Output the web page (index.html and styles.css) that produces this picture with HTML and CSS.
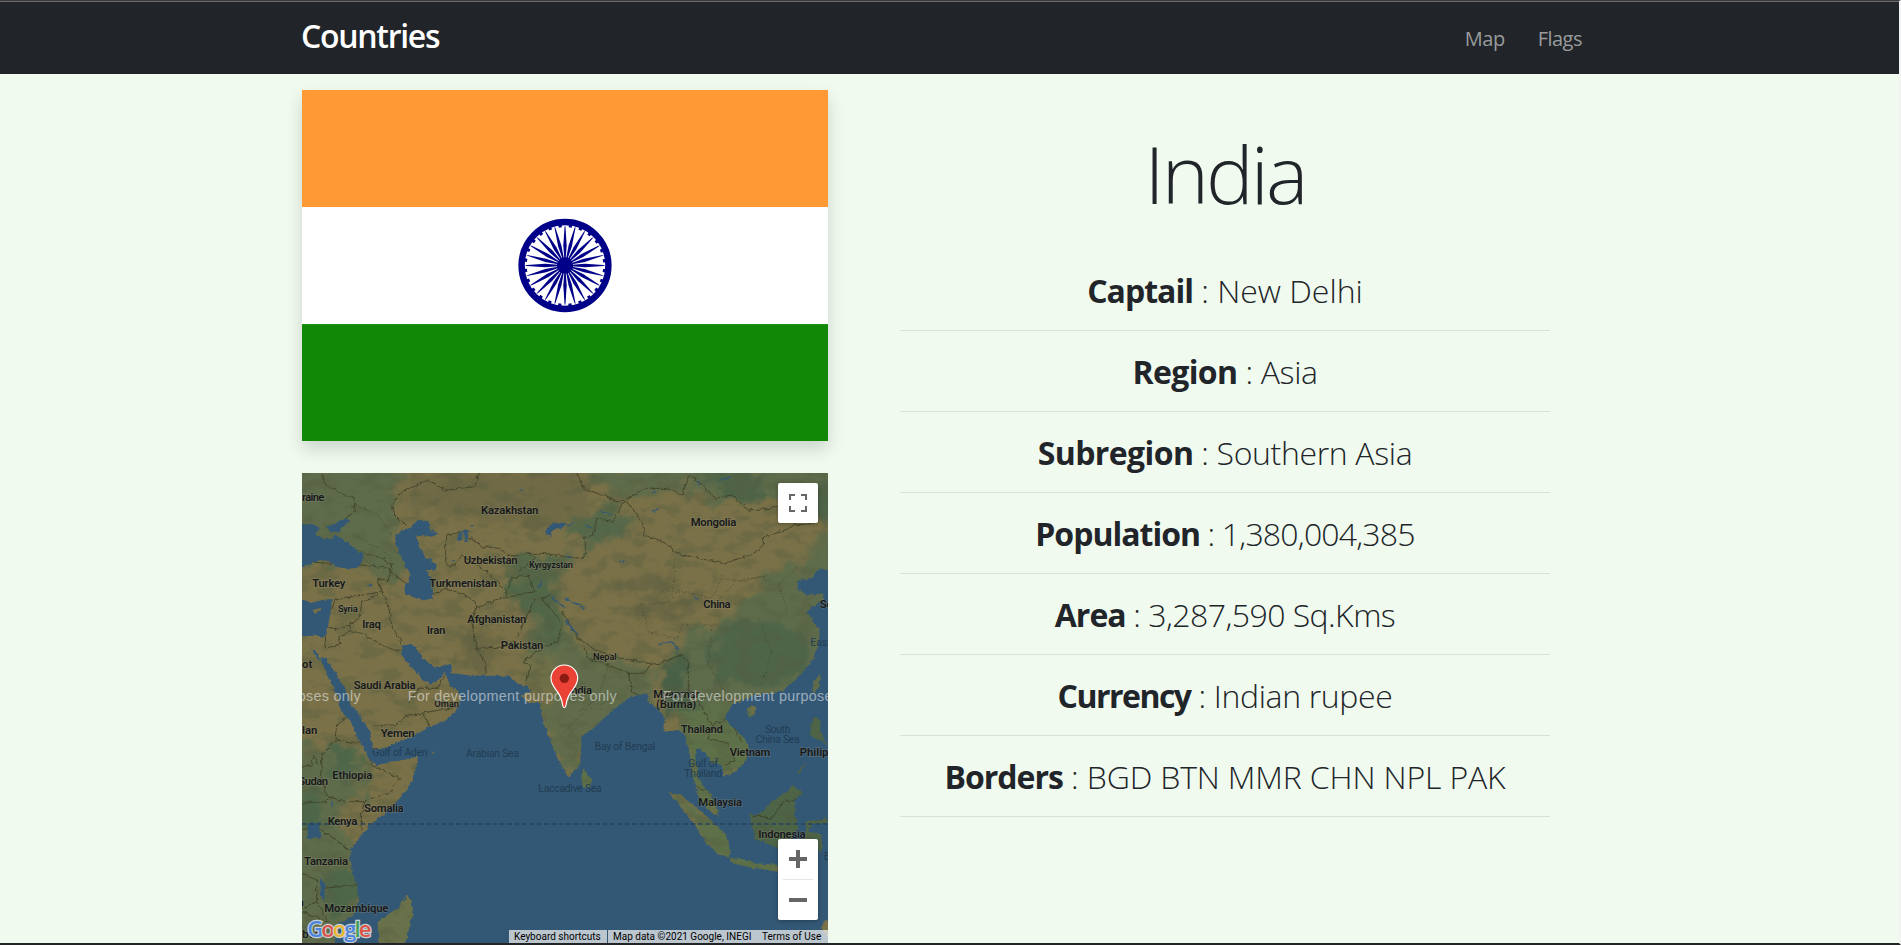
FILE: index.html
```
<!DOCTYPE html>
<html lang="en">
<head>
<meta charset="utf-8">
<title>Countries</title>
<link rel="stylesheet" href="styles.css">
</head>
<body>
<header class="navbar">
  <a class="brand">Countries</a>
  <nav class="links"><a class="link-map">Map</a><a class="link-flags">Flags</a></nav>
</header>
<main class="content">
  <section class="visuals">
    <svg class="flag" viewBox="0 0 526 350" preserveAspectRatio="none">
      <rect width="526" height="117" fill="#ff9933"/>
      <rect y="116.7" width="526" height="117" fill="#fff"/>
      <rect y="233.4" width="526" height="117" fill="#128807"/>
      <g transform="translate(263 175)" fill="#000088">
        <circle r="43.4" fill="none" stroke="#000088" stroke-width="6.4"/>
        <circle r="8.2"/>
        <circle r="39.7" fill="none" stroke="#000088" stroke-width="3" stroke-dasharray="3.2 7.193" stroke-dashoffset="-3.6"/>
        <defs><path id="spoke" d="M0-40.5L-.5-38-1.7-20-.7-7H.7L1.7-20 .5-38Z"/>
        <g id="quad"><use href="#spoke"/><use href="#spoke" transform="rotate(15)"/><use href="#spoke" transform="rotate(30)"/><use href="#spoke" transform="rotate(45)"/><use href="#spoke" transform="rotate(60)"/><use href="#spoke" transform="rotate(75)"/></g></defs>
        <use href="#quad"/><use href="#quad" transform="rotate(90)"/><use href="#quad" transform="rotate(180)"/><use href="#quad" transform="rotate(270)"/>
      </g>
    </svg>
    <div class="map">
      <svg class="map-canvas" viewBox="21 24 1578 1410" preserveAspectRatio="none">
        <defs>
          <filter id="soft" x="-5%" y="-5%" width="110%" height="110%" color-interpolation-filters="sRGB"><feGaussianBlur stdDeviation="9" result="b"/><feTurbulence type="fractalNoise" baseFrequency=".02" numOctaves="4" seed="4" result="n"/><feDisplacementMap in="b" in2="n" scale="90" xChannelSelector="R" yChannelSelector="G"/></filter>
          <filter id="coast" x="0" y="0" width="100%" height="100%" color-interpolation-filters="sRGB"><feTurbulence type="fractalNoise" baseFrequency=".07" numOctaves="2" seed="7" result="n"/><feDisplacementMap in="SourceGraphic" in2="n" scale="14" xChannelSelector="R" yChannelSelector="G"/></filter>
          <filter id="relief" x="0" y="0" width="100%" height="100%" color-interpolation-filters="sRGB"><feTurbulence type="fractalNoise" baseFrequency=".016 .026" numOctaves="5" seed="11"/><feColorMatrix values="0 0 0 0 .33  0 0 0 0 .36  0 0 0 0 .25  5 0 0 0 -2.4"/></filter>
        </defs>
        <rect x="21" y="24" width="1578" height="1410" fill="#7a7148"/>
        <g filter="url(#soft)">
          <path fill="#5f6c4b" d="M0 0H330L300 100 300 200 330 330 300 380 230 310 130 290 0 320Z"/>
          <path fill="#706a46" d="M340 20H880V150L700 190 500 150 330 140Z"/>
          <path fill="#5f6c4b" d="M860 0H1620V60L1480 120 1390 90 1260 110 1170 60 1080 90 990 100 900 60Z"/>
          <path fill="#4e6447" d="M1200 20H1400L1420 110 1340 120Z M1530 100L1620 20V200Z"/>
          <path fill="#5f6c4b" d="M1620 190L1500 290 1400 350 1330 420 1270 500 1180 480 1130 600 1180 720H1620Z"/>
          <path fill="#4f6548" d="M1280 480L1420 460 1540 520 1520 640 1400 680 1270 640 1240 560Z"/>
          <path fill="#476047" d="M1090 610L1170 570 1180 700 1260 720 1350 800 1280 830 1130 740Z"/>
          <path fill="#606c4b" d="M800 450L860 560 950 590 1080 610 1060 720 950 770 870 830 850 940 790 920 740 740 790 630 700 580 700 450Z"/>
          <path fill="#6f7048" d="M730 570L800 560 790 650 700 690 680 610Z"/>
          <path fill="#516748" d="M630 340L780 330 810 500 760 540 710 440 630 380Z"/>
          <path fill="#55694a" d="M650 270L840 280 800 330 650 330Z M960 120L1020 190 880 250 810 180Z"/>
          <path fill="#5f6c4b" d="M0 870L120 825 210 880 210 1000 110 1050 180 1140 200 1460H0Z"/>
          <path fill="#4e6749" d="M110 830L200 880 170 960 110 930Z M80 1230L200 1220 190 1320 110 1360Z M0 980H70L80 1100H0Z"/>
          <path fill="#5d7048" d="M1150 720H1380V940H1260L1280 1060 1200 1000Z M1100 960L1340 1120 1460 1190V1260L1300 1210Z M850 890H910V1000H840Z"/>
          <path fill="#4d6447" d="M1350 940H1620V1180H1350Z M1480 720H1620V970H1480Z"/>
          <path fill="#68714a" d="M230 1280H370V1450H230Z"/>
          <path fill="#6b6744" d="M500 480L600 530 580 620 500 620Z M1000 320L1150 330 1120 380 980 370Z M1010 420L1200 390 1200 440 1050 480Z"/>
        </g>
        <rect x="21" y="24" width="1578" height="1410" filter="url(#relief)" opacity=".35"/>
        <g filter="url(#coast)">
          <g fill="none" stroke="#3f4029" stroke-width="2.6" stroke-linejoin="round">
            <path d="M80 24L90 60 140 85 180 100 178 140 150 162M335 185L300 150 290 120 320 80 400 45 450 75 540 65 550 24M452 300V212L500 200 560 245 610 250 650 275 700 262 720 280 670 320M452 300H480L500 270 560 310 630 370 635 390M415 385L450 370 500 385 540 410 545 430 600 405 690 385 720 380 700 330 650 340 640 370"/>
            <path d="M21 290L200 300 240 305 280 310 330 355M190 255L260 280 290 300 280 350 250 340 260 380 120 405 110 435M250 390L200 410 195 460 130 495 100 490M165 478L165 500 200 505 290 555 325 555M250 350L280 420 290 480 320 535M165 500L130 515 140 535 95 552 90 510M545 430L530 470 545 550 575 600 570 625M545 550L640 545 670 510 720 400M690 655L710 600 685 590 740 550 790 530 800 470 740 400 770 390M340 715L370 670 430 670 450 625M232 780L300 780 330 755 380 745 490 725M385 745L405 785"/>
            <path d="M845 24L865 70 920 90 970 110 990 105 1050 70 1110 70 1160 90 1185 30 1220 55 1260 100 1310 90 1360 135 1430 130 1480 110M995 110L1040 170 1050 210 1125 240 1140 265 1285 295 1370 270 1405 240 1405 215 1460 200 1500 180 1560 175M990 105L955 170 905 160 895 210 865 220 875 265 855 280 740 265 700 265"/>
            <path d="M800 440L850 520 900 555 980 580 1040 590 1080 600 1160 570 1180 590 1180 690M870 550L880 580 940 600 1000 625 1050 625 1070 590M1000 625L1010 680 1045 700M1180 690L1210 710 1260 690 1310 710M1210 710L1250 780 1240 820 1300 835 1320 890 1290 900M1250 780L1300 760 1340 830"/>
            <path d="M120 825L125 780 160 750M120 825L200 835 220 860M120 825L80 870 80 950 100 995 150 1010 210 1010M315 940L230 900 225 880M21 905L50 900 55 870 70 900M21 1015L90 1010 110 1000M21 1092H75L165 1155M210 1010L200 1040 198 1095M21 1225L65 1245 65 1310 21 1330M85 1270L185 1260M65 1310L100 1370 21 1340M1205 965L1220 975 1240 975M1370 1050L1430 1060 1465 1010 1510 1000"/>
            <path stroke-dasharray="12 8" d="M210 1008L280 985 315 940"/>
            <path stroke-dasharray="5 5" opacity=".6" d="M170 120L240 140 290 210M165 205L270 260 300 300M1100 375L1190 385 1250 400 1280 340 1340 350 1410 330M1040 420L1130 410 1140 300M1040 420L1060 500 1150 520 1160 480 1280 480M1280 400L1320 350 1420 330M1250 480L1240 600 1290 680M1390 460L1430 560 1400 660M1510 300L1450 360 1480 450M940 600L910 700 850 740M780 830L880 730 960 700"/>
          </g>
          <path fill="#335876" fill-rule="evenodd" d="M0 175L50 180 75 188 60 208 85 222 125 212 145 225 185 255 205 270 200 295 185 308 160 312 125 305 100 288 70 285 40 300 0 318ZM90 188L150 160 165 163 140 190 125 205 100 195Z
          M0 395L50 412 85 405 110 402 108 430 100 480 88 515 60 512 0 514ZM52 440L62 432 80 430 62 445Z
          M300 215L320 195 340 190 370 165 400 168 405 195 430 205 410 215 385 210 365 215 370 240 385 262 393 285 405 280 425 300 420 315 395 315 410 350 415 390 410 405 380 402 350 395 330 385 328 365 340 350 345 325 325 290 305 250Z
          M48 545L60 560 78 582 70 584 58 568Z M490 200H500V225H490ZM505 192H520V230H507Z M750 195L780 172 815 175 800 190 770 195 770 215 755 208Z M38 1074L75 1072 76 1118 38 1120ZM75 1240L88 1250 90 1315 78 1290Z M110 1002L118 1030 110 1025Z
          M75 578L100 640 130 695 132 725 150 750 170 775 190 825 215 860 225 885 245 900 300 890 368 875 365 905 345 960 310 1005 270 1045 230 1075 200 1110 170 1150 165 1170 175 1230 187 1260 190 1320 170 1355 130 1375 130 1410 110 1450H1620V318L1595 315 1575 310 1550 340 1510 345 1508 370 1535 390 1585 385 1585 402 1535 440 1555 470 1575 500 1570 540 1550 590 1510 640 1460 680 1370 692 1350 705 1310 718 1290 755 1305 780 1340 810 1360 840 1355 885 1320 920 1285 935 1280 900 1250 890 1230 865 1210 850 1200 870 1205 910 1215 950 1230 970 1250 990 1265 1030 1272 1055 1255 1045 1215 1005 1200 960 1190 920 1185 870 1170 810 1150 795 1110 800 1105 755 1090 730 1062 715 1055 685 1005 695 955 735 895 790 860 815 855 900 820 937 790 885 765 825 740 755 735 710 700 715 680 692 710 675 685 660 665 655 640 632 540 632 470 625 468 598 455 600 420 605 385 580 365 550 345 535 318 540 325 580 345 600 365 625 370 620 378 640 385 652 410 655 430 645 450 620 457 640 465 660 490 680 500 700 480 740 450 768 400 785 350 815 300 835 260 855 232 852 225 800 200 760 165 712 150 670 130 640 110 605 90 575Z
          M865 910L878 925 893 945 885 970 865 968 858 940Z
          M1122 982L1155 990 1195 1020 1240 1060 1275 1090 1300 1120 1305 1175 1275 1170 1230 1130 1200 1080 1160 1030Z
          M1305 1180L1340 1182 1390 1195 1450 1200V1220L1380 1210 1310 1195Z
          M1360 1045L1390 1050 1430 1010 1470 985 1495 960 1525 985 1500 1005 1500 1050 1510 1090 1490 1120 1450 1150 1380 1120 1370 1080Z
          M1535 1068L1599 1060V1075L1550 1080 1540 1100 1580 1110 1580 1165 1560 1140 1545 1180 1530 1120Z
          M1545 780L1560 755 1580 765 1575 800 1599 840 1580 830 1550 815Z M1505 925L1535 890 1510 930Z M1550 655L1575 630 1575 660 1555 685Z
          M1355 730L1370 720 1385 730 1380 750 1360 755Z
          M335 1290L350 1310 355 1340 340 1400 325 1450H250L248 1370 270 1355 310 1330Z M408 862L425 862 415 866Z M1585 1370L1599 1365V1420L1580 1390Z"/>
          <path fill="none" stroke="#335876" stroke-width="4" d="M815 180L835 176M920 140L945 150M870 180L890 190M1070 82L1085 80M1070 140L1090 135M1210 45L1212 65M1275 45L1305 35M740 350L730 370M770 395L810 430M810 400L870 430M810 465L850 510M1090 540L1130 530 1150 555M1195 395L1210 402M220 362L232 360M670 75H680M525 182H535M970 290L990 288M810 278H830M470 290L480 285"/>
        </g>
        <path d="M21 1077H1599" stroke="#28435a" stroke-width="4" stroke-dasharray="14 8"/>
        <g class="label sea">
          <text x="232" y="872" textLength="166">Gulf of Aden</text><text x="513" y="877" textLength="159">Arabian Sea</text>
          <text x="899" y="855" textLength="182">Bay of Bengal</text><text x="730" y="981" textLength="190">Laccadive Sea</text>
          <text x="1410" y="804" textLength="76">South</text><text x="1382" y="833" textLength="132">China Sea</text>
          <text x="1180" y="907" textLength="89">Gulf of</text><text x="1168" y="935" textLength="113">Thailand</text>
          <text x="1546" y="543">East</text><text x="1587" y="1184">B</text>
        </g>
        <g class="label">
          <text x="21" y="108" textLength="67">raine</text><text x="558" y="147" textLength="172">Kazakhstan</text>
          <text x="506" y="297" textLength="162">Uzbekistan</text><text class="minor" x="702" y="308" textLength="132">Kyrgyzstan</text>
          <text x="52" y="365" textLength="99">Turkey</text><text x="403" y="365" textLength="203">Turkmenistan</text>
          <text class="minor" x="129" y="441" textLength="59">Syria</text><text x="202" y="490" textLength="56">Iraq</text>
          <text x="395" y="508" textLength="56">Iran</text><text x="517" y="475" textLength="177">Afghanistan</text>
          <text x="617" y="552" textLength="128">Pakistan</text><text x="21" y="609">ot</text>
          <text x="176" y="673" textLength="186">Saudi Arabia</text><text class="minor" x="418" y="727" textLength="74">Oman</text>
          <text x="1187" y="182" textLength="137">Mongolia</text><text x="1225" y="429" textLength="82">China</text>
          <text x="1574" y="429">So</text><text class="minor" x="894" y="584" textLength="71">Nepal</text>
          <text x="820" y="686" textLength="71">India</text><text x="1075" y="698" textLength="138">Myanmar</text>
          <text x="1083" y="728" textLength="121">(Burma)</text><text x="21" y="806">lan</text>
          <text x="257" y="815" textLength="102">Yemen</text><text x="112" y="941" textLength="120">Ethiopia</text>
          <text x="10" y="959" textLength="89">Sudan</text><text x="207" y="1040" textLength="119">Somalia</text>
          <text x="98" y="1080" textLength="89">Kenya</text><text x="27" y="1199" textLength="132">Tanzania</text>
          <text x="88" y="1340" textLength="192">Mozambique</text><text x="22" y="1418">bwe</text><text x="8" y="1322">a</text>
          <text x="1157" y="803" textLength="127">Thailand</text><text x="1304" y="872" textLength="122">Vietnam</text>
          <text x="1514" y="872">Philippines</text><text x="1210" y="1022" textLength="131">Malaysia</text>
          <text x="1390" y="1120" textLength="142">Indonesia</text>
        </g>
        <g class="watermark"><text x="-430" y="708" textLength="627">For development purposes only</text><text x="338" y="708" textLength="627">For development purposes only</text><text x="1103" y="708" textLength="627">For development purposes only</text></g>
        <path d="M808 728C803 728 803 721 801 710 795 677 768 669 768 640A40 40 0 0 1 848 640C848 669 821 677 815 710 813 721 813 728 808 728Z" fill="#ea4335" stroke="#fff" stroke-width="3.5"/>
        <circle cx="808" cy="640" r="14" fill="#8b1a12"/>
        <text class="google" x="37" y="1415" textLength="192"><tspan fill="#4d86de">G</tspan><tspan fill="#dd5347">o</tspan><tspan fill="#e9b62c">o</tspan><tspan fill="#4d86de">g</tspan><tspan fill="#3f9f59">l</tspan><tspan fill="#dd5347">e</tspan></text>
      </svg>
      <div class="control fullscreen"><svg viewBox="0 0 18 18" width="18" height="18"><path fill="#666" d="M0 0h6v2H2v4H0zM12 0h6v6h-2V2h-4zM0 12h2v4h4v2H0zM16 12h2v6h-6v-2h4z"/></svg></div>
      <div class="control zoom">
        <svg viewBox="0 0 18 18" width="18" height="18"><path fill="#666" d="M7 0h4v7h7v4h-7v7H7v-7H0V7h7z"/></svg>
        <i class="divider"></i>
        <svg viewBox="0 0 18 18" width="18" height="18"><path fill="#666" d="M0 7h18v4H0z"/></svg>
      </div>
      <div class="attribution"><span class="keys">Keyboard shortcuts</span><span class="data">Map data ©2021 Google, INEGI</span><span class="terms">Terms of Use</span></div>
    </div>
  </section>
  <section class="details">
    <h1>India</h1>
    <ul class="facts">
      <li class="capital"><b>Captail</b> : New Delhi</li>
      <li class="region"><b>Region</b> : Asia</li>
      <li class="subregion"><b>Subregion</b> : Southern Asia</li>
      <li class="population"><b>Population</b> : 1,380,004,385</li>
      <li class="area"><b>Area</b> : 3,287,590 Sq.Kms</li>
      <li class="currency"><b>Currency</b> : Indian rupee</li>
      <li class="borders"><b>Borders</b> : BGD BTN MMR CHN NPL PAK</li>
    </ul>
  </section>
</main>
</body>
</html>
```
FILE: styles.css
```
* { box-sizing: border-box; }
html { height: 945px; overflow: hidden; }
body {
  margin: 0;
  width: 1901px;
  height: 945px;
  overflow: hidden;
  display: flex;
  flex-direction: column;
  background: #f0faef;
  color: #212529;
  font-family: "Open Sans", "Noto Sans", sans-serif;
  border-top: 1px solid #3a3a3c;
  border-right: 2px solid #f3f3f3;
  border-bottom: 2px solid #222426;
}
.navbar {
  flex: none;
  height: 73px;
  padding: 0 317px 0 301px;
  display: flex;
  justify-content: space-between;
  background: #212529;
  border-top: 1px solid #6b6b6d;
}
.brand { color: #fff; font-size: 32px; font-weight: 600; line-height: 48px; padding-top: 10px; letter-spacing: -1.3px; }
.links { display: flex; gap: 33px; padding-top: 22px; font-size: 20px; line-height: 30px; letter-spacing: -.5px; color: #999b9d; }
.content { flex: 1; min-height: 0; display: flex; padding: 16px 349px 0 302px; gap: 72px; }
.visuals { width: 526px; flex: none; display: flex; flex-direction: column; gap: 32px; }
.flag { display: block; flex: none; width: 526px; height: 351px; box-shadow: 0 8px 16px rgba(0,0,0,.15); }
.map { position: relative; flex: none; width: 526px; height: 470px; overflow: hidden; background: #335876; }
.map-canvas { display: block; width: 526px; height: 470px; }
.label text { font-family: Roboto, sans-serif; font-size: 34px; font-weight: 600; fill: #17181a; stroke: rgba(150,150,125,.35); stroke-width: 4px; paint-order: stroke; }
.label .minor { font-size: 28px; }
.sea text { font-weight: 400; font-size: 31px; fill: #223c52; stroke: none; }
.watermark text { font-family: "Liberation Sans", Arial, sans-serif; font-size: 43px; fill: rgba(255,255,255,.5); }
.google { font-family: "Open Sans", sans-serif; font-size: 66px; font-weight: 600; stroke: #c9d0d4; stroke-width: 7px; paint-order: stroke; }
.control { position: absolute; right: 10px; width: 40px; background: #fff; border-radius: 2px; display: flex; flex-direction: column; align-items: center; box-shadow: 0 1px 4px rgba(0,0,0,.3); }
.fullscreen { top: 10px; height: 40px; justify-content: center; }
.zoom { top: 366px; height: 81px; justify-content: space-between; padding: 11px 0; }
.divider { width: 30px; height: 1px; background: #e6e6e6; }
.attribution { position: absolute; right: 0; bottom: 0; width: 319px; height: 13px; display: flex; background: rgba(245,245,245,.7); color: #000; font: 10px/13px Roboto, sans-serif; white-space: nowrap; }
.keys { width: 99px; padding-left: 5px; border-right: 1px solid #335876; }
.data { width: 150px; padding-left: 5px; }
.terms { padding-left: 4px; }
.details { flex: 1; min-width: 0; padding-top: 35px; text-align: center; }
h1 { margin: 0 0 29px; font-size: 80px; font-weight: 300; line-height: 96px; letter-spacing: -2.9px; }
.facts { list-style: none; margin: 0; padding: 0; }
.facts li { height: 81px; padding: 17px 0 15px; border-bottom: 1px solid #d8e2da; font-size: 32px; line-height: 48px; font-weight: 340; letter-spacing: -.35px; white-space: nowrap; }
.facts b { font-weight: 700; letter-spacing: -1px; }
.facts .capital { letter-spacing: 0; }
.facts .borders { letter-spacing: -.15px; }
.facts .population { letter-spacing: -.8px; }
.facts .area { letter-spacing: -.55px; }
.subregion b, .region b { letter-spacing: -.6px; }
.currency b { letter-spacing: -1.5px; }
```
